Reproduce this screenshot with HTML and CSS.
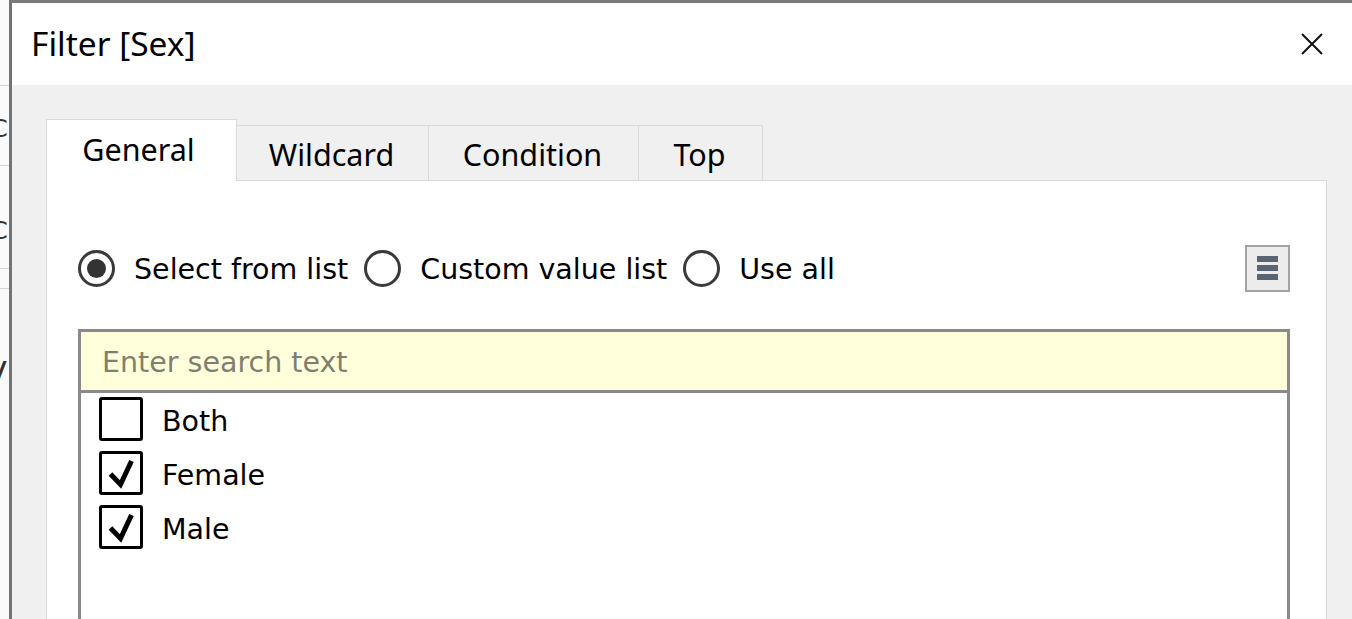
FILE: index.html
```html
<!DOCTYPE html>
<html>
<head>
<meta charset="utf-8">
<link rel="stylesheet" href="styles.css">
</head>
<body>
<div class="desk">
  <div class="behind">
    <div class="gl gl1"></div>
    <div class="ch ch1">C</div>
    <div class="gl gl2"></div>
    <div class="ch ch2">C</div>
    <div class="gl gl3"></div>
    <div class="gl gl4"></div>
    <div class="ch ch3">V</div>
  </div>
  <div class="dialog">
    <div class="titlebar">
      <span class="title">Filter [Sex]</span>
      <svg class="close" width="22" height="22" viewBox="0 0 22 22"><path d="M1 1 L21 21 M21 1 L1 21" stroke="#111" stroke-width="2" fill="none"/></svg>
    </div>
    <div class="body">
      <div class="tabs">
        <div class="tab active t1">General</div>
        <div class="tab t2">Wildcard</div>
        <div class="tab t3">Condition</div>
        <div class="tab t4">Top</div>
      </div>
      <div class="panel">
        <div class="radios">
          <div class="radio on"><span class="circle"><span class="dot"></span></span><span class="rl">Select from list</span></div>
          <div class="radio"><span class="circle"></span><span class="rl">Custom value list</span></div>
          <div class="radio"><span class="circle"></span><span class="rl">Use all</span></div>
          <div class="menubtn"><span class="bar"></span><span class="bar"></span><span class="bar"></span></div>
        </div>
        <div class="search"><span class="ph">Enter search text</span></div>
        <div class="list">
          <div class="row"><span class="cb"></span><span class="lbl">Both</span></div>
          <div class="row"><span class="cb"><svg class="tick" width="38" height="38" viewBox="0 0 38 38"><path d="M8.5 20 L18.5 30.5 L29.5 7" stroke="#000" stroke-width="5" fill="none" stroke-linejoin="miter"/></svg></span><span class="lbl">Female</span></div>
          <div class="row"><span class="cb"><svg class="tick" width="38" height="38" viewBox="0 0 38 38"><path d="M8.5 20 L18.5 30.5 L29.5 7" stroke="#000" stroke-width="5" fill="none" stroke-linejoin="miter"/></svg></span><span class="lbl">Male</span></div>
        </div>
      </div>
    </div>
  </div>
</div>
</body>
</html>
```
FILE: styles.css
```css
html, body {
  margin: 0;
  padding: 0;
  width: 1352px;
  height: 619px;
  overflow: hidden;
  background: #fff;
}
.desk {
  display: flex;
  height: 619px;
}
.behind {
  width: 9px;
  flex: none;
  position: relative;
  background: #fafafa;
  overflow: hidden;
  font-family: "DejaVu Sans", sans-serif;
}
.gl {
  position: absolute;
  left: 0;
  width: 9px;
  height: 1px;
  background: #d4d4d4;
}
.gl1 { top: 85px; }
.gl2 { top: 165px; }
.gl3 { top: 268px; }
.gl4 { top: 288px; }
.ch {
  position: absolute;
  font-size: 24px;
  color: #333;
  line-height: 30px;
}
.ch1 { top: 114px; left: -9px; }
.ch2 { top: 216px; left: -9px; }
.ch3 { top: 358px; left: -15px; font-size: 32px; }
.dialog {
  flex: 1;
  border-left: 3px solid #737373;
  border-top: 3px solid #7a7a7a;
  display: flex;
  flex-direction: column;
  background: #f0f0f0;
}
.titlebar {
  height: 82px;
  background: #fff;
  display: flex;
  align-items: center;
  justify-content: space-between;
  padding: 0 29px 0 19px;
  flex: none;
}
.title {
  font-family: "Noto Sans", sans-serif;
  font-size: 33.5px;
  color: #000;
  margin-top: -2px;
}
.body {
  flex: 1;
  padding: 34px 0 0 34px;
  display: flex;
  flex-direction: column;
}
.tabs {
  display: flex;
  align-items: flex-end;
  height: 61px;
  flex: none;
}
.tab {
  font-family: "Noto Sans", sans-serif;
  font-size: 30.5px;
  color: #000;
  height: 55px;
  box-sizing: border-box;
  border: 1px solid #d9d9d9;
  border-bottom: none;
  border-left: none;
  display: flex;
  align-items: center;
  justify-content: center;
  background: #f0f0f0;
  padding: 2px 2px 0 0;
}
.tab.active {
  background: #fff;
  border-left: 1px solid #d9d9d9;
  margin-bottom: -1px;
  position: relative;
  z-index: 1;
  height: 62px;
  padding: 0 6px 4px 0;
}
.t1 { width: 191px; }
.t2 { width: 192px; }
.t3 { width: 210px; }
.t4 { width: 124px; }
.panel {
  flex: 1;
  width: 1281px;
  box-sizing: border-box;
  background: #fff;
  border: 1px solid #d9d9d9;
  border-bottom: none;
  padding: 63px 36px 0 31px;
  display: flex;
  flex-direction: column;
  font-family: "DejaVu Sans", sans-serif;
  font-size: 28.5px;
  color: #000;
}
.radios {
  display: flex;
  align-items: center;
  height: 48px;
  flex: none;
}
.radio {
  display: flex;
  align-items: center;
  margin-right: 16px;
}
.rl { padding-top: 3px; }
.circle {
  width: 37px;
  height: 37px;
  box-sizing: border-box;
  border: 3px solid #3a3a3a;
  border-radius: 50%;
  display: flex;
  align-items: center;
  justify-content: center;
  margin-right: 19px;
  flex: none;
}
.dot {
  width: 19px;
  height: 19px;
  border-radius: 50%;
  background: #333;
}
.menubtn {
  margin-left: auto;
  width: 45px;
  height: 47px;
  box-sizing: border-box;
  border: 2px solid #a3a3a3;
  background: #ececec;
  display: flex;
  flex-direction: column;
  align-items: center;
  justify-content: center;
  gap: 3px;
}
.bar {
  width: 21px;
  height: 6px;
  background: #5a6472;
}
.search {
  margin-top: 37px;
  height: 64px;
  box-sizing: border-box;
  border: 3px solid #8a8a8a;
  background: #ffffdc;
  color: #7f7f6f;
  display: flex;
  align-items: center;
  padding-left: 21px;
  flex: none;
}
.ph { padding-top: 3px; }
.list {
  flex: 1;
  border: 3px solid #8a8a8a;
  border-top: none;
  border-bottom: none;
  padding: 4px 0 0 18px;
  display: flex;
  flex-direction: column;
  gap: 10px;
}
.row {
  display: flex;
  align-items: center;
  height: 44px;
}
.cb {
  width: 44px;
  height: 44px;
  box-sizing: border-box;
  border: 3px solid #000;
  border-radius: 3px;
  margin-right: 19px;
  flex: none;
}
.tick { display: block; }
.lbl { line-height: 44px; padding-top: 6px; }
```
